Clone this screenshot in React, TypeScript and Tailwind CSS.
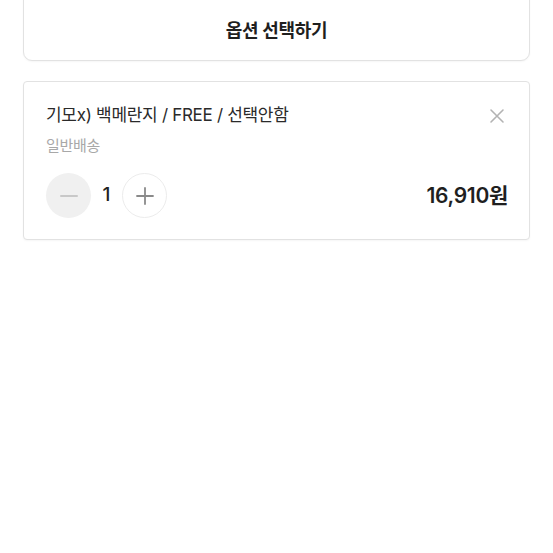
import React from "react";

export default function App() {
  const font = { fontFamily: 'Inter, "Noto Sans CJK KR", "Noto Sans", sans-serif' };
  return (
    <div className="w-[553px] h-[553px] bg-white overflow-hidden" style={font}>
      <div className="px-[23px]">
        <div className="mt-[-12px] h-[73px] rounded-[9px] border border-[#e2e2e2] bg-white flex items-center justify-center pt-[12px] shadow-[0_1px_2px_rgba(0,0,0,0.04)]">
          <span className="text-[18px] font-bold text-[#1f1f1f] tracking-[-0.3px]">옵션 선택하기</span>
        </div>
        <div className="mt-[20px] h-[159px] rounded-[4px] border border-[#e2e2e2] bg-white pl-[22px] pr-[21px] pt-[20px] shadow-[0_1px_2px_rgba(0,0,0,0.04)]">
          <div className="flex items-center justify-between h-[28px]">
            <span className="text-[17px] text-[#2a2a2a] tracking-[-0.3px]">기모x) 백메란지 / FREE / 선택안함</span>
            <svg width="16" height="16" viewBox="0 0 16 16" className="mr-[3px]">
              <path d="M2 2 L14 14 M14 2 L2 14" stroke="#b3b3b3" strokeWidth="1.6" strokeLinecap="round" />
            </svg>
          </div>
          <div className="mt-[4px] text-[15px] text-[#a8a8a8] tracking-[-0.3px] h-[24px] leading-[24px]">일반배송</div>
          <div className="mt-[15px] flex items-center justify-between">
            <div className="flex items-center">
              <div className="w-[45px] h-[45px] rounded-full bg-[#f0f0f0] flex items-center justify-center">
                <svg width="20" height="20" viewBox="0 0 20 20">
                  <path d="M2 10 H18" stroke="#c8c8c8" strokeWidth="2" strokeLinecap="round" />
                </svg>
              </div>
              <span className="w-[31px] text-center text-[19px] font-medium text-[#222]">1</span>
              <div className="w-[45px] h-[45px] rounded-full bg-white border border-[#ececec] flex items-center justify-center">
                <svg width="20" height="20" viewBox="0 0 20 20">
                  <path d="M2 10 H18 M10 2 V18" stroke="#8a8a8a" strokeWidth="1.8" strokeLinecap="round" />
                </svg>
              </div>
            </div>
            <span className="text-[21px] font-semibold text-[#1f1f1f] tracking-[-0.3px]">16,910원</span>
          </div>
        </div>
      </div>
    </div>
  );
}
